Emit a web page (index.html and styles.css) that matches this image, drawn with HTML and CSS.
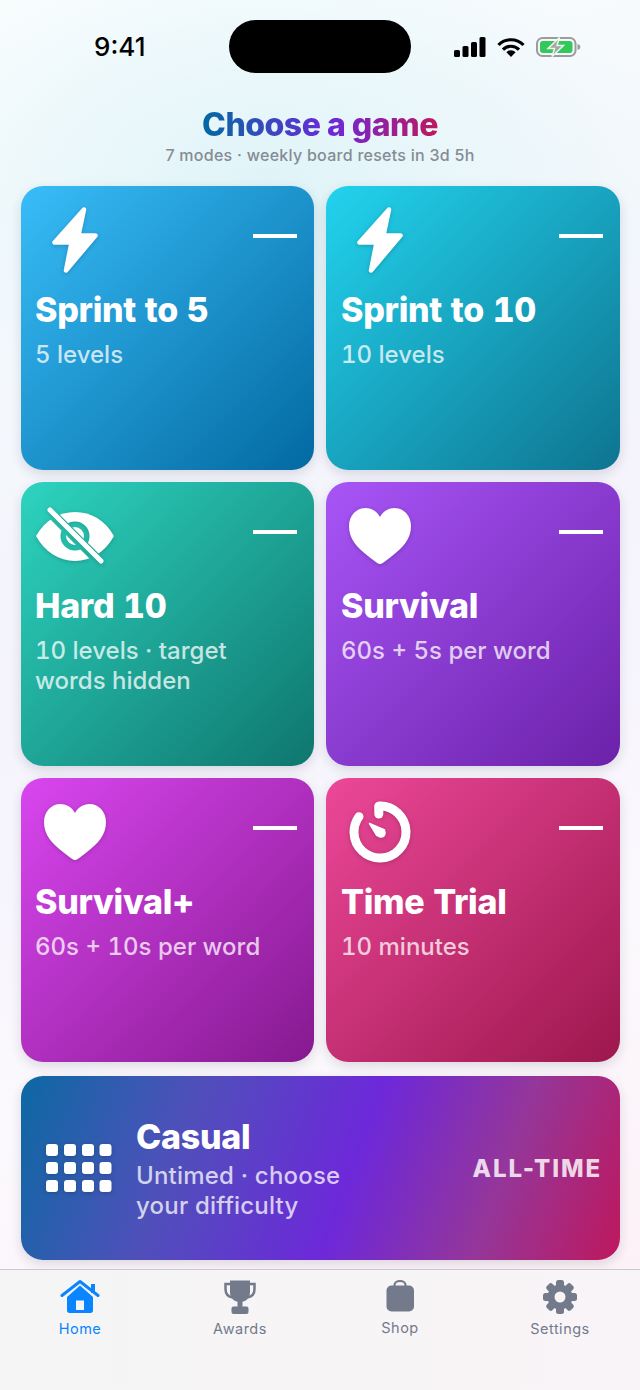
FILE: index.html
```html
<!DOCTYPE html>
<html lang="en">
<head>
    <meta charset="UTF-8">
    <meta name="viewport" content="width=device-width, initial-scale=1.0">
    <title>Choose a game</title>
    <link rel="stylesheet" href="styles.css">
</head>
<body>

    <!-- Status bar -->
    <div class="status">
        <div class="time">9:41</div>
        <div class="island"></div>
        <div class="status-icons">
            <svg width="32" height="20" viewBox="0 0 32 20" fill="#000">
                <rect x="0" y="13" width="6" height="7" rx="1.5"/>
                <rect x="8.5" y="9" width="6" height="11" rx="1.5"/>
                <rect x="17" y="5" width="6" height="15" rx="1.5"/>
                <rect x="25.5" y="0" width="6" height="20" rx="1.5"/>
            </svg>
            <svg width="28" height="19" viewBox="0 0 28 19" fill="none" stroke="#000" stroke-width="3.2">
                <path d="M1.5 7a17.5 17.5 0 0 1 25 0"/>
                <path d="M6 11.6a11.2 11.2 0 0 1 16 0"/>
                <path d="M14 19l-4.6-4.8a6.500 6.500 0 0 1 9.200 0z" fill="#000" stroke="none"/>
            </svg>
            <svg width="45" height="20" viewBox="0 0 45 20">
                <rect x="1" y="1" width="38.5" height="18" rx="5.5" fill="none" stroke="#9c9c9c" stroke-width="2"/>
                <rect x="4" y="4" width="32.5" height="12" rx="3" fill="#34c759"/>
                <path d="M41.5 7c1.800.4 2.800 1.500 2.800 3s-1 2.600-2.800 3z" fill="#9c9c9c"/>
                <path d="M23.500 0.500L12 11.500h6.500L16 19.500 27.500 8.500H21z" fill="#a6a6a6" stroke="#e9f7ee" stroke-width="1.500"/>
            </svg>
        </div>
    </div>

    <div class="header">
        <h1 class="title">Choose a game</h1>
        <p class="subtitle">7 modes · weekly board resets in 3d 5h</p>
    </div>

    <div class="modes">
        <div class="grid">
            <div class="card sky">
                <div class="card-top">
                    <svg class="icon" width="78" height="68" viewBox="0 0 78 68">
                        <path d="M48 3.500L18.500 36.500H35.500L30 64.500 59.500 29.500H42.500z" fill="#fff" stroke="#fff" stroke-width="4.500" stroke-linejoin="round"/>
                    </svg>
                    <span class="dash"></span>
                </div>
                <h2 class="card-title">Sprint to 5</h2>
                <p class="card-sub">5 levels</p>
            </div>

            <div class="card cyan">
                <div class="card-top">
                    <svg class="icon" width="78" height="68" viewBox="0 0 78 68">
                        <path d="M48 3.500L18.500 36.500H35.500L30 64.500 59.500 29.500H42.500z" fill="#fff" stroke="#fff" stroke-width="4.500" stroke-linejoin="round"/>
                    </svg>
                    <span class="dash"></span>
                </div>
                <h2 class="card-title">Sprint to 10</h2>
                <p class="card-sub">10 levels</p>
            </div>

            <div class="card teal">
                <div class="card-top">
                    <svg class="icon" width="78" height="68" viewBox="0 0 78 68">
                        <mask id="eyeCut">
                            <rect width="78" height="68" fill="#fff"/>
                            <circle cx="39" cy="34" r="14.500" fill="#000"/>
                            <path d="M13 9L64 60" stroke="#000" stroke-width="10"/>
                        </mask>
                        <mask id="ringCut">
                            <rect width="78" height="68" fill="#fff"/>
                            <path d="M13 9L64 60" stroke="#000" stroke-width="10"/>
                        </mask>
                        <path d="M0 34C9 18 23 10 39 10S69 18 78 34C69 50 55 59 39 59S9 50 0 34z" fill="#fff" mask="url(#eyeCut)"/>
                        <circle cx="39" cy="34" r="9" fill="#fff" mask="url(#ringCut)"/>
                        <path d="M14 8L65 59" stroke="#fff" stroke-width="5" stroke-linecap="round"/>
                    </svg>
                    <span class="dash"></span>
                </div>
                <h2 class="card-title">Hard 10</h2>
                <p class="card-sub">10 levels · target<br>words hidden</p>
            </div>

            <div class="card purple">
                <div class="card-top">
                    <svg class="icon" width="78" height="68" viewBox="0 0 78 68">
                        <path d="M39 62C37 62 34 59.500 27 54C16 45.500 8 37 8 24C8 13.500 15.500 6 24.500 6C31 6 36 9.500 39 15C42 9.500 47 6 53.500 6C62.500 6 70 13.500 70 24C70 37 62 45.500 51 54C44 59.500 41 62 39 62z" fill="#fff"/>
                    </svg>
                    <span class="dash"></span>
                </div>
                <h2 class="card-title">Survival</h2>
                <p class="card-sub">60s + 5s per word</p>
            </div>

            <div class="card fuchsia">
                <div class="card-top">
                    <svg class="icon" width="78" height="68" viewBox="0 0 78 68">
                        <path d="M39 62C37 62 34 59.500 27 54C16 45.500 8 37 8 24C8 13.500 15.500 6 24.500 6C31 6 36 9.500 39 15C42 9.500 47 6 53.500 6C62.500 6 70 13.500 70 24C70 37 62 45.500 51 54C44 59.500 41 62 39 62z" fill="#fff"/>
                    </svg>
                    <span class="dash"></span>
                </div>
                <h2 class="card-title">Survival+</h2>
                <p class="card-sub">60s + 10s per word</p>
            </div>

            <div class="card pink">
                <div class="card-top">
                    <svg class="icon" width="78" height="68" viewBox="0 0 78 68">
                        <circle cx="39" cy="34" r="26" fill="none" stroke="#fff" stroke-width="9" stroke-linecap="round" stroke-dasharray="139 24.400" transform="rotate(-92 39 34)"/>
                        <path d="M37.800 8.500V16" fill="none" stroke="#fff" stroke-width="9" stroke-linecap="round"/>
                        <circle cx="40" cy="35" r="4.800" fill="#fff"/>
                        <path d="M28.500 25.500L35.800 37.500 43.500 32z" fill="#fff" stroke="#fff" stroke-width="1.500" stroke-linejoin="round"/>
                    </svg>
                    <span class="dash"></span>
                </div>
                <h2 class="card-title">Time Trial</h2>
                <p class="card-sub">10 minutes</p>
            </div>
        </div>

        <div class="wide-card">
            <svg class="wide-icon" width="66" height="48" viewBox="0 0 66 48" fill="#fff">
                <rect x="0" y="0" width="12" height="12" rx="3"/>
                <rect x="18" y="0" width="12" height="12" rx="3"/>
                <rect x="36" y="0" width="12" height="12" rx="3"/>
                <rect x="53.500" y="0" width="12" height="12" rx="3"/>
                <rect x="0" y="18" width="12" height="12" rx="3"/>
                <rect x="18" y="18" width="12" height="12" rx="3"/>
                <rect x="36" y="18" width="12" height="12" rx="3"/>
                <rect x="53.500" y="18" width="12" height="12" rx="3"/>
                <rect x="0" y="36" width="12" height="12" rx="3"/>
                <rect x="18" y="36" width="12" height="12" rx="3"/>
                <rect x="36" y="36" width="12" height="12" rx="3"/>
                <rect x="53.500" y="36" width="12" height="12" rx="3"/>
            </svg>
            <div class="wide-text">
                <h2 class="card-title">Casual</h2>
                <p class="card-sub">Untimed · choose<br>your difficulty</p>
            </div>
            <span class="wide-tag">ALL-TIME</span>
        </div>
    </div>

    <!-- Tab bar -->
    <div class="tabbar">
        <div class="tab active">
            <svg width="40" height="36" viewBox="0 0 40 36" fill="#0a84ff">
                <path d="M20 6.500L7 18V31.500C7 33 8 34 9.500 34H16V21.500H24V34H30.500C32 34 33 33 33 31.500V18z"/>
                <path d="M2 16.500L20 2.500 38 16.500" fill="none" stroke="#0a84ff" stroke-width="3" stroke-linecap="round" stroke-linejoin="round"/>
                <rect x="31" y="5" width="4" height="9"/>
                <path d="M16 31h8v3h-8z"/>
            </svg>
            <span>Home</span>
        </div>
        <div class="tab">
            <svg width="40" height="36" viewBox="0 0 40 36" fill="#737a8c">
                <path d="M10 1.500H30V13C30 19 26 23 20 23S10 19 10 13z"/>
                <path d="M10 5H5.500V10C5.500 15 8.500 18 13 18.500M30 5H34.500V10C34.500 15 31.500 18 27 18.500" fill="none" stroke="#737a8c" stroke-width="2.500"/>
                <rect x="17.500" y="21" width="5" height="7"/>
                <rect x="11.500" y="27.500" width="17" height="7.500" rx="2"/>
            </svg>
            <span>Awards</span>
        </div>
        <div class="tab shop">
            <svg width="40" height="36" viewBox="0 0 40 36" fill="#737a8c">
                <path d="M14.500 7V6C14.500 3.500 17 2 20 2S25.500 3.500 25.500 6V7" fill="none" stroke="#737a8c" stroke-width="2.200"/>
                <rect x="6.500" y="6.500" width="27.500" height="26" rx="5"/>
            </svg>
            <span>Shop</span>
        </div>
        <div class="tab">
            <svg width="40" height="36" viewBox="0 0 40 36">
                <g fill="#737a8c">
                    <circle cx="20" cy="18" r="12.500"/>
                    <rect x="16" y="1" width="8" height="34" rx="2.500"/>
                    <rect x="16" y="1" width="8" height="34" rx="2.500" transform="rotate(45 20 18)"/>
                    <rect x="16" y="1" width="8" height="34" rx="2.500" transform="rotate(90 20 18)"/>
                    <rect x="16" y="1" width="8" height="34" rx="2.500" transform="rotate(135 20 18)"/>
                </g>
                <circle cx="20" cy="18" r="5.500" fill="#f8f5f7"/>
            </svg>
            <span>Settings</span>
        </div>
    </div>

</body>
</html>
```

FILE: styles.css
```css
* {
    margin: 0;
    padding: 0;
    box-sizing: border-box;
}

body {
    width: 640px;
    height: 1390px;
    overflow: hidden;
    font-family: Inter, "Liberation Sans", sans-serif;
    background:
        radial-gradient(ellipse 400px 260px at 270px 190px, #dff4f8 0%, rgba(223, 244, 248, 0) 100%),
        linear-gradient(160deg, #f9fdfe 0%, #f4f8fc 25%, #f5f3fc 45%, #fbf9fd 70%, #fdeff6 100%);
}

.status {
    display: grid;
    grid-template-columns: 229px 182px 229px;
    height: 74px;
    padding-top: 20px;
}

.time {
    padding: 12px 0 0 94px;
    font-size: 26px;
    line-height: 30px;
    font-weight: 500;
    color: #000;
}

.island {
    height: 53px;
    background-color: #000;
    border-radius: 27px;
}

.status-icons {
    display: flex;
    align-items: center;
    gap: 11px;
    height: 20px;
    margin-top: 17px;
    padding-left: 43px;
}

.header {
    padding-top: 31px;
    text-align: center;
}

.title {
    width: max-content;
    margin: 0 auto;
    font-size: 32px;
    line-height: 40px;
    font-weight: 800;
    letter-spacing: -0.5px;
    color: transparent;
    background: linear-gradient(90deg, #0369a1, #6d28d9 55%, #be185d);
    -webkit-background-clip: text;
    background-clip: text;
}

.subtitle {
    font-size: 16px;
    line-height: 20px;
    font-weight: 500;
    letter-spacing: 0.27px;
    color: #868b93;
}

.modes {
    padding: 21px 20px 0 21px;
}

.grid {
    display: grid;
    grid-template-columns: 293px 294px;
    grid-auto-rows: 284px;
    gap: 12px;
}

.card {
    padding: 20px 17px 0 14px;
    border-radius: 22px;
    color: #fff;
    box-shadow: 0 4px 12px rgba(30, 30, 60, 0.14);
}

.card:nth-child(even) {
    padding-left: 15px;
}

.card-top {
    display: flex;
    justify-content: space-between;
    align-items: center;
    height: 68px;
    margin-bottom: 17px;
    padding-left: 1px;
}

.card:nth-child(even) .card-top {
    padding-left: 0;
}

.icon {
    display: block;
    flex-shrink: 0;
    filter: drop-shadow(0 1px 2px rgba(0, 0, 0, 0.2));
}

.dash {
    display: block;
    width: 44px;
    height: 4px;
    margin-bottom: 8px;
    background-color: #fff;
}

.card-title {
    font-size: 34px;
    line-height: 38px;
    font-weight: 800;
    letter-spacing: -0.3px;
    font-variant-numeric: tabular-nums;
    color: #fff;
}

.card-sub {
    margin-top: 11px;
    font-size: 24px;
    line-height: 30px;
    font-weight: 500;
    font-variant-numeric: tabular-nums;
    color: rgba(255, 255, 255, 0.75);
}

.sky { background: linear-gradient(135deg, #38bdf8, #0369a1); }
.cyan { background: linear-gradient(135deg, #22d3ee, #0e7490); }
.teal { background: linear-gradient(135deg, #2dd4bf, #0f766e); }
.purple { background: linear-gradient(135deg, #a855f7, #6b21a8); }
.fuchsia { background: linear-gradient(135deg, #d946ef, #86198f); }
.pink { background: linear-gradient(135deg, #ec4899, #9d174d); }

.wide-card {
    display: flex;
    align-items: center;
    height: 184px;
    margin-top: 14px;
    padding: 0 18px 0 25px;
    border-radius: 22px;
    background: linear-gradient(110deg, #0c69a3, #4f50ba 27%, #6d28d9 55%, #953699 78%, #be185d);
    box-shadow: 0 4px 12px rgba(30, 30, 60, 0.14);
}

.wide-icon {
    display: block;
    flex-shrink: 0;
    filter: drop-shadow(0 1px 2px rgba(0, 0, 0, 0.2));
}

.wide-text {
    flex: 1;
    margin-top: 3px;
    margin-left: 24px;
}

.wide-text .card-sub {
    margin-top: 5px;
    letter-spacing: 0.2px;
}

.wide-tag {
    font-size: 24px;
    font-weight: 800;
    letter-spacing: 1.9px;
    color: rgba(255, 255, 255, 0.82);
}

.tabbar {
    display: grid;
    grid-template-columns: repeat(4, 1fr);
    height: 121px;
    margin-top: 9px;
    padding-top: 9px;
    border-top: 1px solid #c9c9cc;
    background: linear-gradient(90deg, #f5f5f5, #f9f4f7);
}

.tab {
    display: flex;
    flex-direction: column;
    align-items: center;
    font-size: 14.5px;
    line-height: 18px;
    font-weight: 400;
    letter-spacing: 0.5px;
    color: #737a8c;
}

.tab svg {
    display: block;
    margin-bottom: 5px;
}

.tab.active {
    color: #0a84ff;
}

.shop span {
    margin-top: -1px;
}
```
